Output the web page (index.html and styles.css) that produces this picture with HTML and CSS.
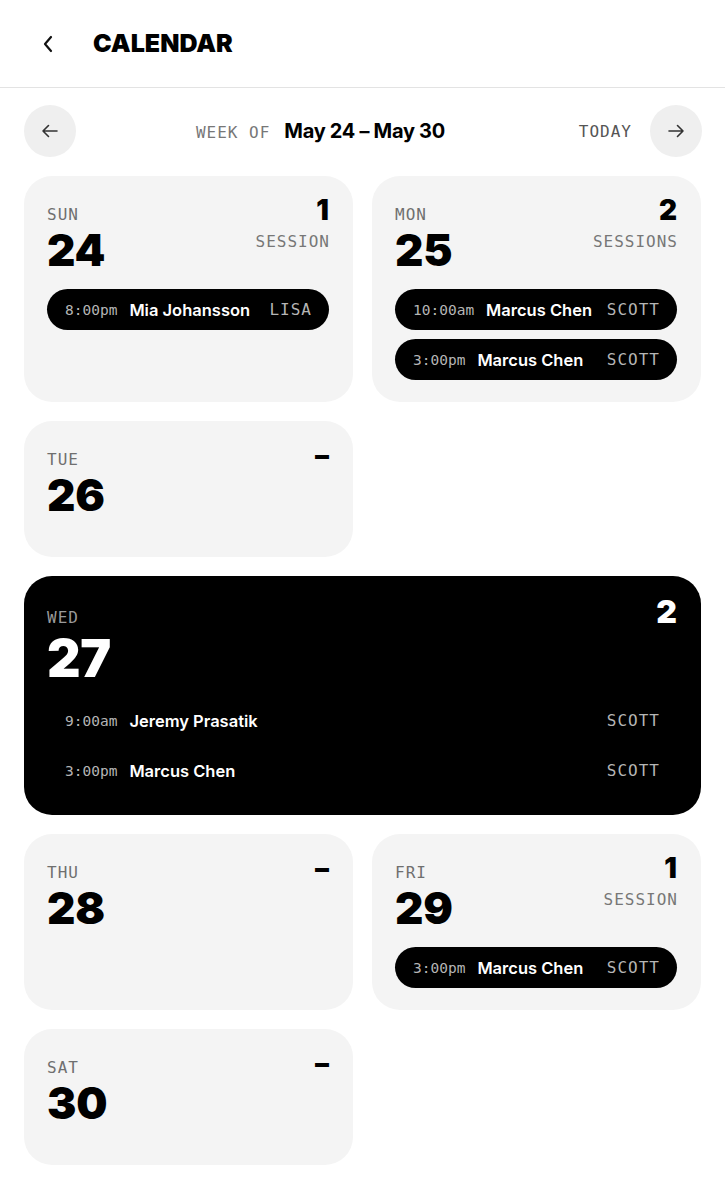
FILE: index.html
```html
<!DOCTYPE html>
<html lang="en">
<head>
<meta charset="utf-8">
<title>Calendar</title>
<link rel="stylesheet" href="styles.css">
</head>
<body>
<header class="topbar">
  <button class="back" aria-label="Back">
    <svg width="16" height="18" viewBox="0 0 16 18"><path d="M11 2 L5 9 L11 16" fill="none" stroke="#111" stroke-width="2.2" stroke-linecap="round" stroke-linejoin="round"/></svg>
  </button>
  <h1 class="title">CALENDAR</h1>
</header>

<nav class="weeknav">
  <button class="circle" aria-label="Previous week">
    <svg width="18" height="14" viewBox="0 0 18 14"><path d="M16 7 H2 M7.5 1.5 L2 7 L7.5 12.5" fill="none" stroke="#333" stroke-width="1.6" stroke-linecap="round" stroke-linejoin="round"/></svg>
  </button>
  <div class="week"><span class="week-of">WEEK OF</span><span class="range">May 24 – May 30</span></div>
  <span class="today-link">TODAY</span>
  <button class="circle" aria-label="Next week">
    <svg width="18" height="14" viewBox="0 0 18 14"><path d="M2 7 H16 M10.5 1.5 L16 7 L10.5 12.5" fill="none" stroke="#333" stroke-width="1.6" stroke-linecap="round" stroke-linejoin="round"/></svg>
  </button>
</nav>

<main class="grid">
  <section class="day">
    <div class="head">
      <span class="dow">SUN</span><span class="count">1</span>
      <span class="date">24</span><span class="sub">SESSION</span>
    </div>
    <ul class="sessions">
      <li class="pill"><span class="time">8:00pm</span><span class="name">Mia Johansson</span><span class="trainer">LISA</span></li>
    </ul>
  </section>

  <section class="day">
    <div class="head">
      <span class="dow">MON</span><span class="count">2</span>
      <span class="date">25</span><span class="sub">SESSIONS</span>
    </div>
    <ul class="sessions">
      <li class="pill"><span class="time">10:00am</span><span class="name">Marcus Chen</span><span class="trainer">SCOTT</span></li>
      <li class="pill"><span class="time">3:00pm</span><span class="name">Marcus Chen</span><span class="trainer">SCOTT</span></li>
    </ul>
  </section>

  <section class="day">
    <div class="head">
      <span class="dow">TUE</span><span class="count">–</span>
      <span class="date">26</span>
    </div>
  </section>

  <section class="day current">
    <div class="head">
      <span class="dow">WED</span><span class="count">2</span>
      <span class="date">27</span>
    </div>
    <ul class="sessions">
      <li class="pill"><span class="time">9:00am</span><span class="name">Jeremy Prasatik</span><span class="trainer">SCOTT</span></li>
      <li class="pill"><span class="time">3:00pm</span><span class="name">Marcus Chen</span><span class="trainer">SCOTT</span></li>
    </ul>
  </section>

  <section class="day">
    <div class="head">
      <span class="dow">THU</span><span class="count">–</span>
      <span class="date">28</span>
    </div>
  </section>

  <section class="day">
    <div class="head">
      <span class="dow">FRI</span><span class="count">1</span>
      <span class="date">29</span><span class="sub">SESSION</span>
    </div>
    <ul class="sessions">
      <li class="pill"><span class="time">3:00pm</span><span class="name">Marcus Chen</span><span class="trainer">SCOTT</span></li>
    </ul>
  </section>

  <section class="day">
    <div class="head">
      <span class="dow">SAT</span><span class="count">–</span>
      <span class="date">30</span>
    </div>
  </section>
</main>
</body>
</html>
```

FILE: styles.css
```css
* { box-sizing: border-box; }

html, body {
  margin: 0;
  padding: 0;
  background: #ffffff;
  color: #000;
  font-family: "Inter", "Liberation Sans", sans-serif;
}

button {
  border: 0;
  background: none;
  padding: 0;
  font: inherit;
  cursor: pointer;
}

/* Top bar */
.topbar {
  height: 88px;
  display: flex;
  align-items: center;
  padding: 0 24px 0 30px;
  gap: 27px;
  border-bottom: 1px solid #e3e3e3;
}

.back {
  width: 36px;
  height: 36px;
  display: flex;
  align-items: center;
  justify-content: center;
}

.title {
  margin: 0;
  font-size: 25px;
  font-weight: 900;
  letter-spacing: 0;
  line-height: 1;
}

/* Week nav */
.weeknav {
  display: flex;
  align-items: center;
  gap: 18px;
  padding: 0 23px 0 24px;
  margin-top: 17px;
  height: 52px;
}

.circle {
  width: 52px;
  height: 52px;
  border-radius: 50%;
  background: #efefef;
  display: flex;
  align-items: center;
  justify-content: center;
  flex: none;
}

.week {
  flex: 1;
  display: flex;
  align-items: baseline;
  justify-content: center;
  gap: 14px;
  margin-right: 14px;
}

.week-of, .today-link, .dow, .sub, .trainer {
  font-family: "DejaVu Sans Mono", "Liberation Mono", monospace;
  font-size: 16px;
  letter-spacing: 1px;
  color: #777;
}

.today-link { color: #555; }

.range {
  font-size: 20px;
  font-weight: 700;
  letter-spacing: -0.3px;
}

/* Grid of days */
.grid {
  display: grid;
  grid-template-columns: 1fr 1fr;
  gap: 19px;
  padding: 19px 24px 40px;
}

.day {
  background: #f4f4f4;
  border-radius: 28px;
  padding: 20px 24px 22px 23px;
  min-height: 136px;
}

.day.current {
  grid-column: 1 / -1;
  background: #000;
  padding-bottom: 24px;
}

.head {
  display: grid;
  grid-template-columns: 1fr auto;
  align-items: baseline;
}

.dow {
  line-height: 18px;
  color: #6f6f6f;
}

.count {
  font-size: 28px;
  font-weight: 900;
  line-height: 28px;
  text-align: right;
}

.date {
  grid-column: 1;
  font-size: 44px;
  font-weight: 900;
  line-height: 44px;
  letter-spacing: -0.3px;
  margin-top: 4px;
}

.sub {
  grid-column: 2;
  align-self: start;
  line-height: 18px;
  margin-top: 9px;
  margin-right: -1px;
  text-align: right;
}

.current .dow { color: #9a9a9a; }
.current .count { color: #fff; font-size: 32px; line-height: 32px; }
.current .date { color: #fff; font-size: 52px; line-height: 52px; margin-top: 5px; }

/* Sessions */
.sessions {
  list-style: none;
  margin: 17px 0 0;
  padding: 0;
  display: flex;
  flex-direction: column;
  gap: 9px;
}

.current .sessions { margin-top: 15px; }

.pill {
  height: 41px;
  border-radius: 21px;
  background: #000;
  display: flex;
  align-items: center;
  gap: 12px;
  padding: 0 17px 0 18px;
}

.time {
  font-family: "DejaVu Sans Mono", "Liberation Mono", monospace;
  font-size: 14.5px;
  color: #b5b5b5;
}

.name {
  flex: 1;
  font-size: 16.5px;
  font-weight: 600;
  color: #fff;
  white-space: nowrap;
}

.trainer {
  color: #b5b5b5;
}
```
